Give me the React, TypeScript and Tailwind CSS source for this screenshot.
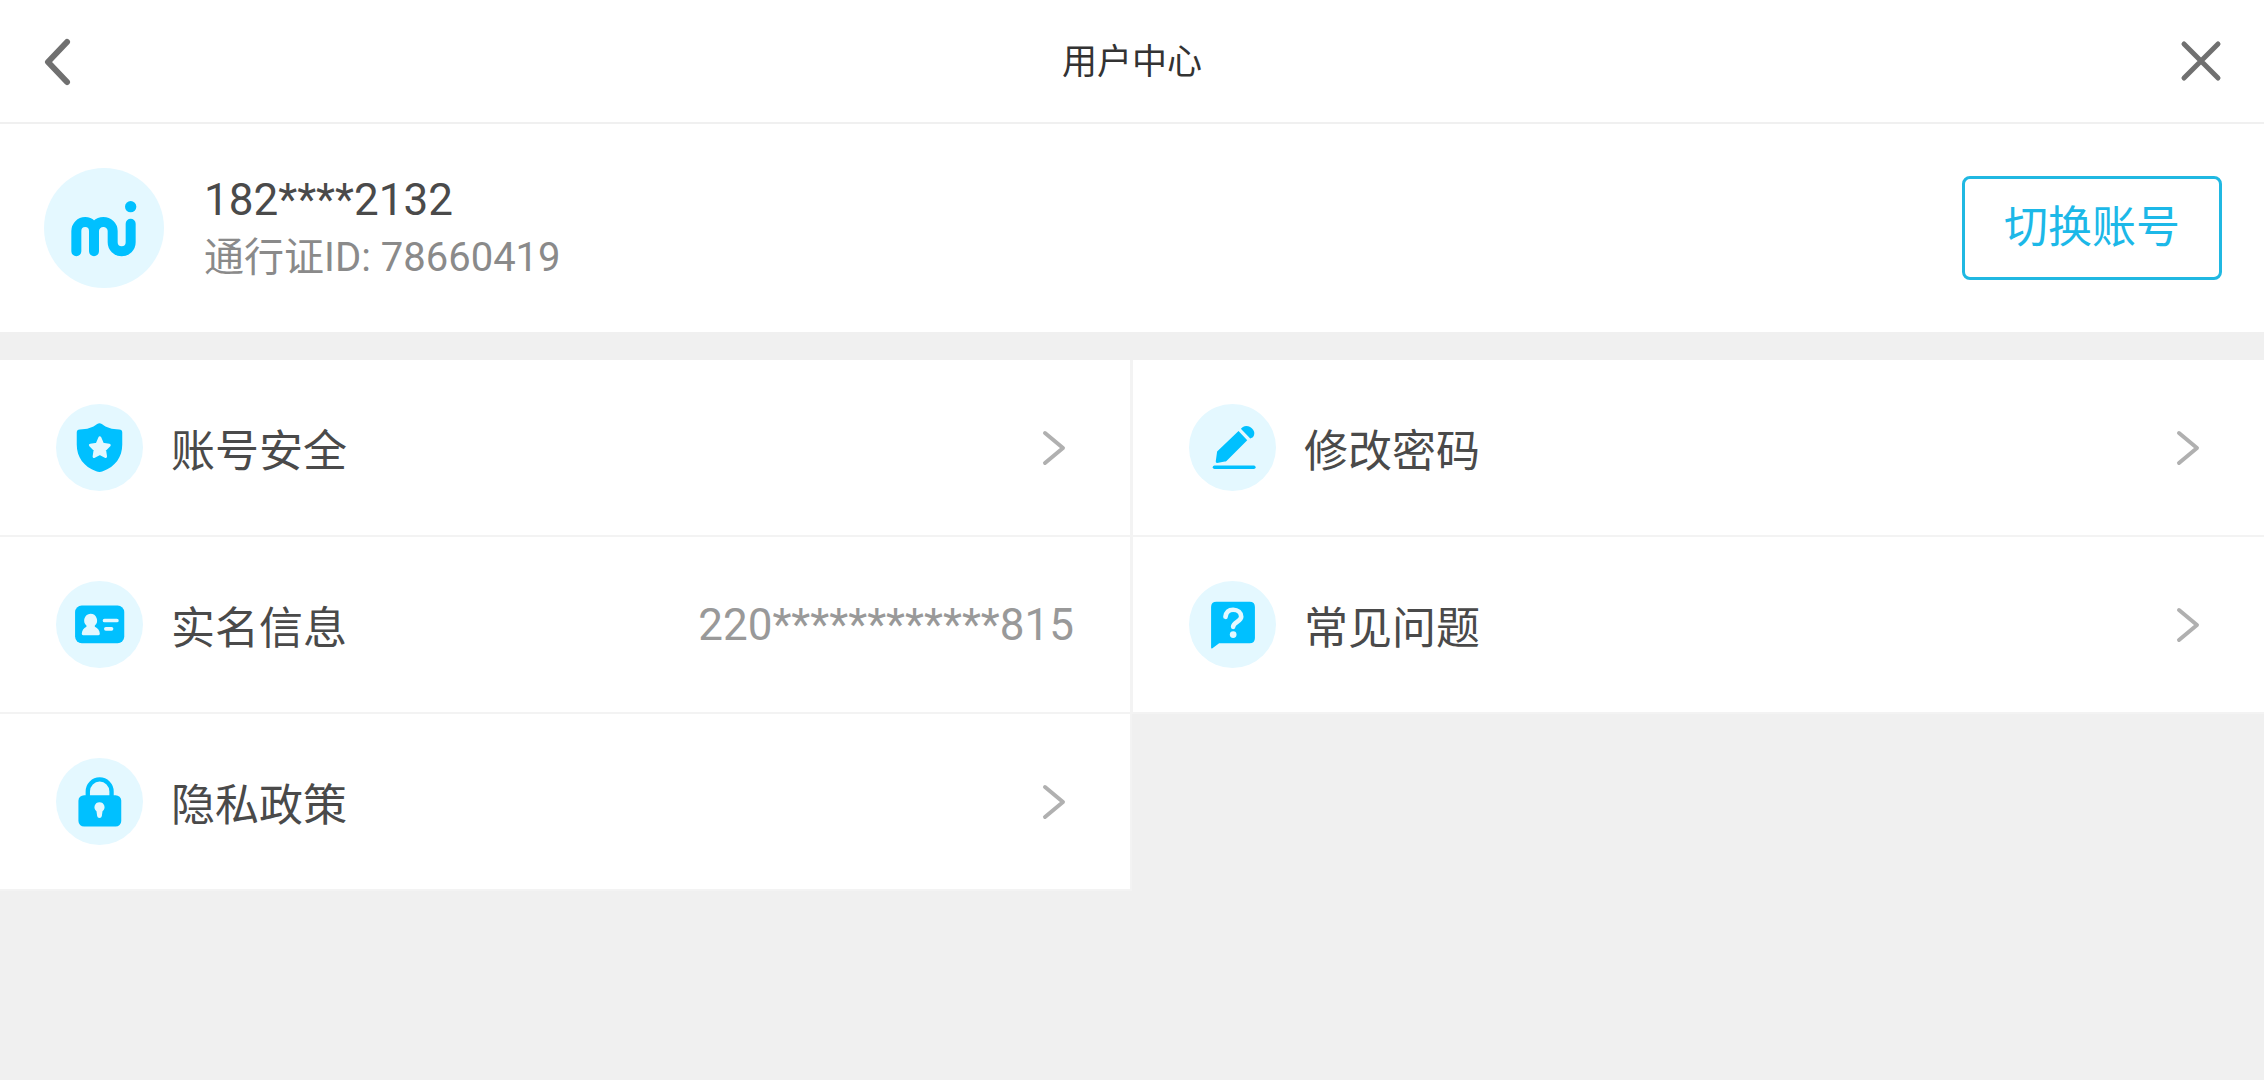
import type { ReactNode } from "react";

function AvatarLogo() {
  return (
    <svg viewBox="0 0 360 360" className="size-30 shrink-0" aria-hidden="true">
      <circle cx="180" cy="180" r="180" fill="#e4f8ff" />
      <path
        d="M97 250V189a26.5 27 0 0 1 53 0V250M150 189a28 27 0 0 1 56 0V223a27 27 0 0 0 54 0V167"
        fill="none"
        stroke="#00c0ff"
        strokeWidth="30"
        strokeLinecap="round"
      />
      <circle cx="260" cy="116" r="17" fill="#00c0ff" />
    </svg>
  );
}

/** 圓底圖示，各功能入口共用。 */
function RoundIcon({ children }: { children: ReactNode }) {
  return (
    <svg viewBox="0 0 260 260" className="size-[87px] shrink-0" aria-hidden="true">
      <circle cx="130" cy="130" r="130" fill="#e4f8ff" />
      {children}
    </svg>
  );
}

function ShieldIcon() {
  return (
    <RoundIcon>
      <path
        d="M123 60q7-5 14 0c14 11 30 16 52 16q9 0 9 9v36c0 38-21 66-58 80q-10 4-20 0c-37-14-58-42-58-80V85q0-9 9-9c22 0 38-5 52-16z"
        fill="#00c0ff"
      />
      <path
        d="M131 101l8 19 20 3-14 14 3 20-17-9-17 9 3-20-14-14 20-3z"
        fill="#e4f8ff"
        stroke="#e4f8ff"
        strokeWidth="9"
        strokeLinejoin="round"
      />
    </RoundIcon>
  );
}

function CardIcon() {
  return (
    <RoundIcon>
      <rect x="57" y="73" width="147" height="113" rx="20" fill="#00c0ff" />
      <path d="M103 98a20 20 0 0 1 13 35v4q14 6 15 21 0 4-4 4H81q-4 0-4-4 1-15 14-21v-4a20 20 0 0 1 12-35z" fill="#e4f8ff" />
      <path d="M145 118h37M149 143h17" stroke="#e4f8ff" strokeWidth="11" strokeLinecap="round" />
    </RoundIcon>
  );
}

function LockIcon() {
  return (
    <RoundIcon>
      <path d="M95 116V100a35.5 36 0 0 1 71 0v16" fill="none" stroke="#00c0ff" strokeWidth="13" />
      <rect x="67" y="111" width="128" height="94" rx="17" fill="#00c0ff" />
      <path d="M130 132a15 15 0 0 1 9 27l-2 14q-1 6-7 6t-7-6l-2-14a15 15 0 0 1 9-27z" fill="#e4f8ff" />
    </RoundIcon>
  );
}

function PenIcon() {
  return (
    <RoundIcon>
      <path d="M84 142l64-61 26 27-62 62q-2 2-5 2l-23 4q-5 0-4-5z" fill="#00c0ff" />
      <path d="M155 74l6-5c17-12 45 12 30 30l-8 4z" fill="#00c0ff" />
      <path d="M76 189h118" stroke="#00c0ff" strokeWidth="10" strokeLinecap="round" />
    </RoundIcon>
  );
}

function QuestionIcon() {
  return (
    <RoundIcon>
      <path d="M82 62h99q16 0 16 16v92q0 16-16 16H90l-20 15q-4 2-4-3V78q0-16 16-16z" fill="#00c0ff" />
      <path
        d="M109 107c2-14 11-21 23-21 14 0 24 9 24 21 0 15-24 14-24 30"
        fill="none"
        stroke="#e4f8ff"
        strokeWidth="14"
        strokeLinecap="round"
      />
      <circle cx="132" cy="160" r="10" fill="#e4f8ff" />
    </RoundIcon>
  );
}

function ArrowRight() {
  return (
    <svg viewBox="0 0 24 36" className="h-9 w-6 shrink-0" fill="none" stroke="#b0b0b0" strokeWidth="4" strokeLinecap="round" strokeLinejoin="round" aria-hidden="true">
      <path d="M3 3l18 15L3 33" />
    </svg>
  );
}

type MenuItem = {
  label: string;
  icon: ReactNode;
  /** 有值時顯示文字，不顯示箭頭。 */
  value?: string;
};

const LEFT_ITEMS: MenuItem[] = [
  { label: "账号安全", icon: <ShieldIcon /> },
  { label: "实名信息", icon: <CardIcon />, value: "220************815" },
  { label: "隐私政策", icon: <LockIcon /> },
];

const RIGHT_ITEMS: MenuItem[] = [
  { label: "修改密码", icon: <PenIcon /> },
  { label: "常见问题", icon: <QuestionIcon /> },
];

function MenuRow({ label, icon, value }: MenuItem) {
  return (
    <li className="border-b-2 border-[#f3f3f3] bg-white">
      <button type="button" className="flex h-[175px] w-full items-center pr-16 pl-14 text-left">
        {icon}
        <span className="ml-7 pt-2 text-[44px] leading-[60px] text-[#4a4a4a]">{label}</span>
        <span className="ml-auto flex items-center">
          {value ?
            <span className="-mr-2 text-[44px] leading-[60px] text-[#999999]">{value}</span>
          : <ArrowRight />}
        </span>
      </button>
    </li>
  );
}

export default function App() {
  return (
    <main className="min-h-screen bg-[#f0f0f0] font-[Roboto,'Noto_Sans_CJK_SC',sans-serif]">
      <header className="flex h-[124px] items-center justify-between border-b-2 border-[#f0f0f0] bg-white px-[42px]">
        <button type="button" aria-label="返回" className="w-[42px]">
          <svg viewBox="0 0 32 52" className="h-[52px] w-8" fill="none" stroke="#707070" strokeWidth="6" strokeLinecap="round" strokeLinejoin="round">
            <path d="M25 7L6 27l19 20" />
          </svg>
        </button>
        <h1 className="pt-1 text-[35px] leading-[52px] text-[#333333]">用户中心</h1>
        <button type="button" aria-label="关闭" className="w-[42px]">
          <svg viewBox="0 0 42 42" className="size-[42px]" fill="none" stroke="#707070" strokeWidth="5" strokeLinecap="round">
            <path d="M4 4l34 34M38 4L4 38" />
          </svg>
        </button>
      </header>

      <section className="flex h-52 items-center bg-white pr-[42px] pl-11">
        <AvatarLogo />
        <div className="ml-10 pt-[2px]">
          <p className="text-[44px] leading-[57px] text-[#4a4a4a]">182****2132</p>
          <p className="text-[40px] leading-[57px] text-[#8a8a8a]">通行证ID: 78660419</p>
        </div>
        <button
          type="button"
          className="ml-auto h-26 w-[260px] rounded-lg border-3 border-[#20b8e2] text-[44px] leading-[60px] text-[#1cb8e8]"
        >
          切换账号
        </button>
      </section>

      <nav className="mt-7 grid grid-cols-2 items-start">
        <ul className="border-r-2 border-[#f3f3f3]">
          {LEFT_ITEMS.map((item) => (
            <MenuRow key={item.label} {...item} />
          ))}
        </ul>
        <ul className="border-l border-[#f3f3f3]">
          {RIGHT_ITEMS.map((item) => (
            <MenuRow key={item.label} {...item} />
          ))}
        </ul>
      </nav>
    </main>
  );
}
